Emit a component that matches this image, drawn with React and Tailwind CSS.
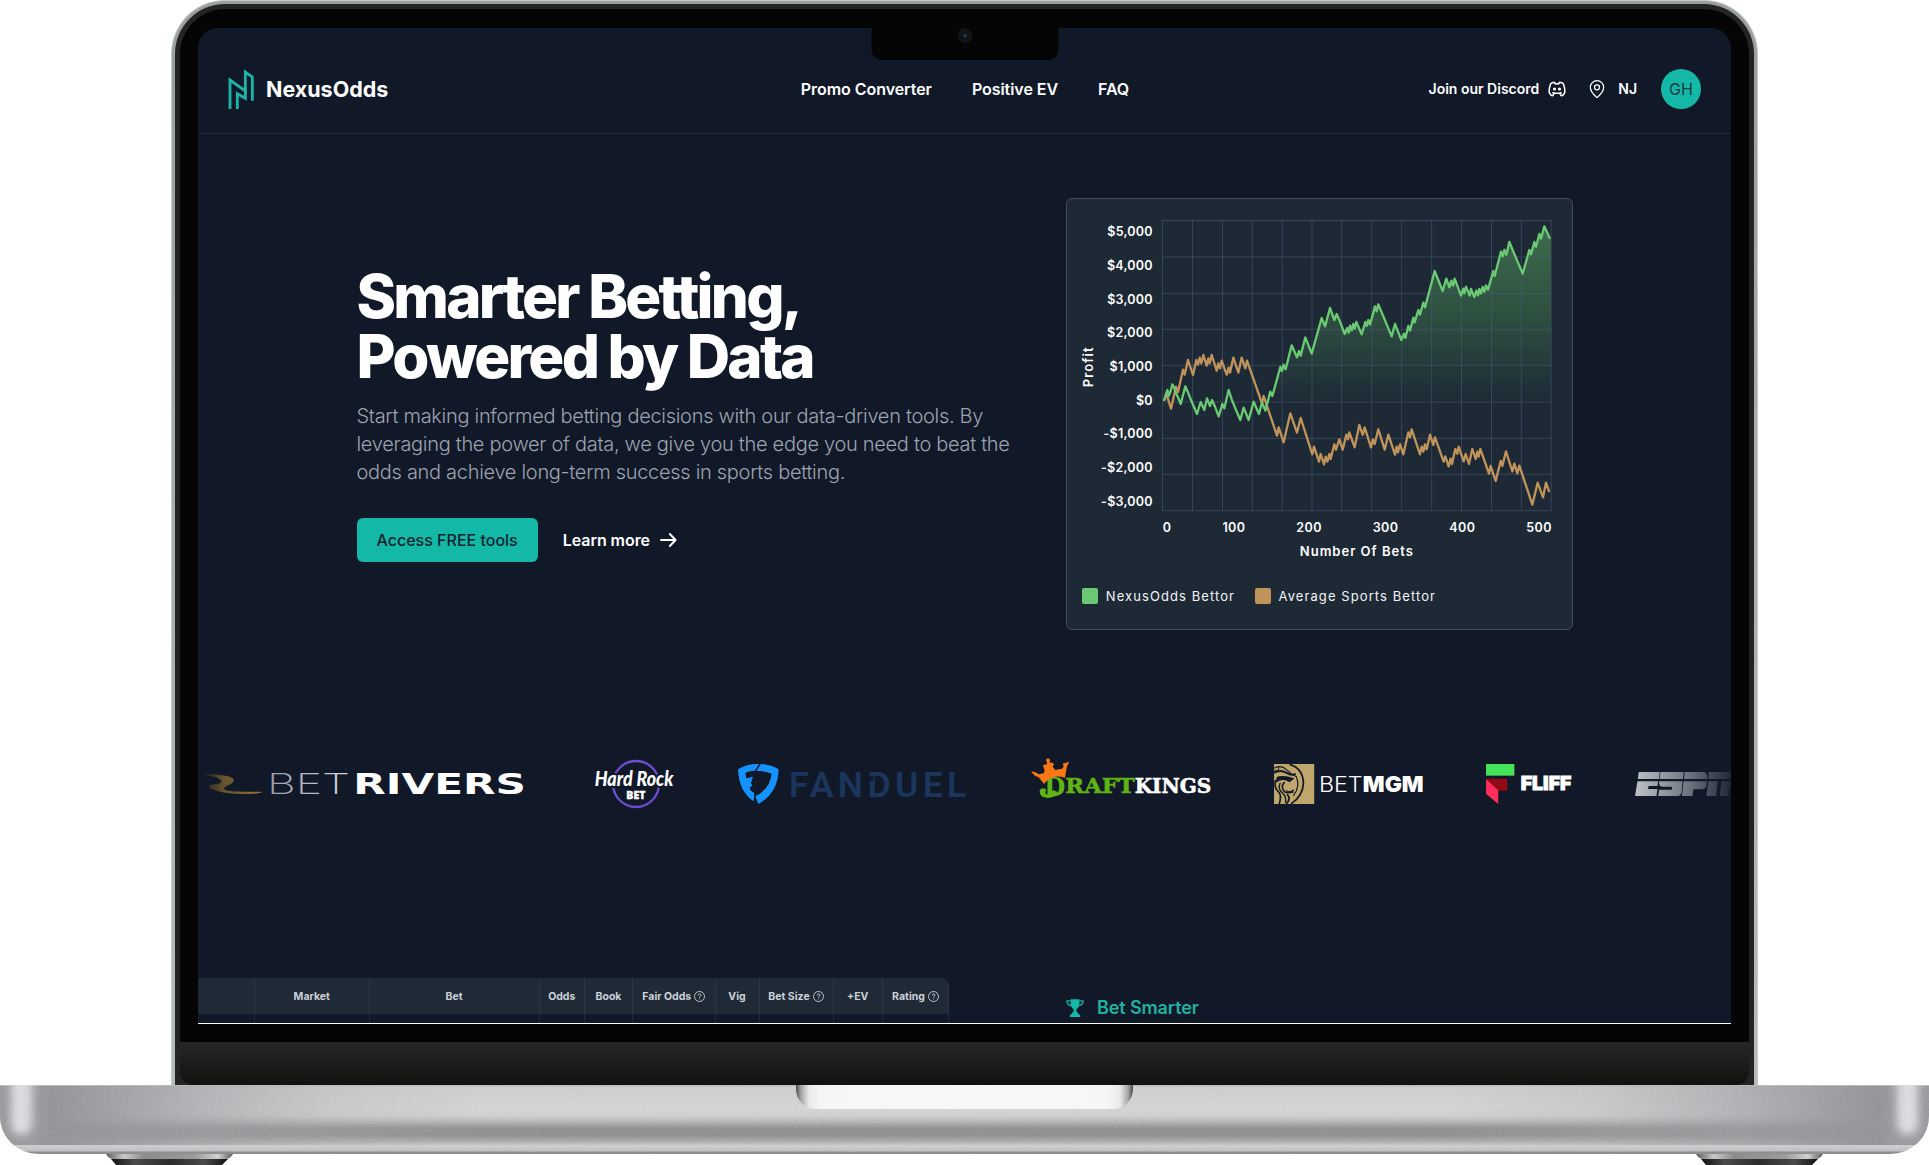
import React from "react";
import { TbBrandDiscord } from "react-icons/tb";
import { MapPin } from "lucide-react";

const NEXUS_LINE =
  "312,633 318,612 322,600 327,617 332,603 337,583 342,592 348,610 354,622 362,642 376,589 383,605 393,630 411,672 422,636 433,660 441,625 450,648 456,630 465,650 476,679 487,642 493,655 506,600 515,628 528,660 541,690 551,653 566,690 581,635 597,672 606,637 616,662 631,605 637,618 645,590 661,531 666,543 671,524 677,538 695,466 711,502 717,483 722,497 736,442 755,491 785,384 795,409 810,354 823,390 830,372 842,400 854,432 862,414 866,428 870,407 875,421 880,402 884,416 889,396 905,433 916,396 920,408 925,390 930,404 945,349 950,364 955,343 995,439 1005,402 1024,450 1032,431 1036,444 1045,408 1050,422 1060,383 1064,397 1075,360 1080,374 1090,338 1095,352 1124,243 1148,303 1159,266 1168,292 1174,272 1179,287 1184,266 1203,317 1210,296 1213,310 1218,290 1229,317 1233,297 1243,321 1249,302 1254,316 1258,297 1263,310 1268,291 1273,305 1278,286 1284,299 1300,243 1304,258 1323,185 1328,199 1333,180 1339,194 1348,156 1388,251 1408,180 1413,193 1423,156 1428,171 1438,132 1443,146 1453,109 1470,146";

const AVERAGE_LINE =
  "312,630 320,614 333,656 348,590 354,606 369,539 374,554 384,510 399,555 409,510 414,524 419,503 424,520 430,495 440,527 445,505 449,520 455,495 470,542 475,520 480,535 485,512 500,554 506,533 510,548 520,503 535,548 545,503 556,535 561,512 606,640 611,618 651,737 656,712 671,757 691,670 711,728 722,684 757,793 762,770 777,815 782,792 792,823 797,800 802,815 808,792 812,807 823,763 828,779 838,748 848,779 859,734 864,748 868,727 884,772 898,705 908,735 914,712 933,772 939,748 944,762 955,718 974,779 985,734 1005,794 1010,770 1014,787 1020,763 1030,793 1045,727 1050,742 1055,718 1080,793 1085,770 1090,785 1095,763 1100,778 1110,734 1120,765 1125,742 1151,815 1156,799 1166,829 1172,806 1176,822 1186,777 1192,791 1196,770 1211,814 1217,792 1227,822 1237,777 1247,807 1252,785 1256,800 1261,777 1287,851 1292,828 1307,873 1322,813 1327,828 1338,784 1357,844 1363,821 1372,850 1378,827 1417,944 1433,878 1449,922 1458,878 1468,906";

const GRID_X = [307.5, 397.5, 487.5, 577, 666.5, 756, 845, 935, 1025, 1115, 1204.5, 1294.5, 1384, 1473.5];
const GRID_Y = [91.5, 201, 310, 418, 526, 636, 745, 853, 962];
const Y_LABELS = ["$5,000", "$4,000", "$3,000", "$2,000", "$1,000", "$0", "-$1,000", "-$2,000", "-$3,000"];
const X_LABELS = ["0", "100", "200", "300", "400", "500"];

function Plot() {
  return (
    <svg className="mt-[20px] block h-[294px] w-[393px] shrink-0" viewBox="303 87 1179 882">
      <defs>
        <linearGradient id="profitFill" x1="0" y1="109" x2="0" y2="636" gradientUnits="userSpaceOnUse">
          <stop offset="0" stopColor="#5fae66" stopOpacity="0.5" />
          <stop offset="0.5" stopColor="#4f9f55" stopOpacity="0.33" />
          <stop offset="1" stopColor="#4f9f55" stopOpacity="0" />
        </linearGradient>
      </defs>
      <polygon points={`625,636 ${NEXUS_LINE.slice(NEXUS_LINE.indexOf("631,605"))} 1473,146 1473,636`} fill="url(#profitFill)" />
      <g stroke="#4b5f7a" strokeOpacity="0.5" strokeWidth="3">
        {GRID_X.map((x) => (
          <line key={x} x1={x} x2={x} y1="90" y2="963" />
        ))}
        {GRID_Y.map((y) => (
          <line key={y} y1={y} y2={y} x1="306" x2="1475" />
        ))}
      </g>
      <polyline points={AVERAGE_LINE} fill="none" stroke="#c0935b" strokeWidth="7" strokeLinejoin="round" />
      <polyline points={NEXUS_LINE} fill="none" stroke="#6cc973" strokeWidth="7" strokeLinejoin="round" />
    </svg>
  );
}

function ProfitCard() {
  return (
    <div className="h-[432px] w-[507px] rounded-md border border-[#434e5b] bg-[#1e2936]">
      <div className="flex h-[315px]">
        <div className="flex h-[303px] w-[42px] items-center justify-center pt-[33px] pl-[1px]">
          <span className="-rotate-90 text-[13px] font-semibold tracking-[1.1px] whitespace-nowrap">Profit</span>
        </div>
        <div className="mt-[17px] flex w-[44px] flex-col items-end text-[12.5px] font-semibold tracking-[0.25px]">
          {Y_LABELS.map((label) => (
            <span key={label} className="flex h-[33.67px] shrink-0 items-center whitespace-nowrap">
              {label}
            </span>
          ))}
        </div>
        <div className="ml-[8px]">
          <Plot />
        </div>
      </div>
      <div className="mt-[2px] flex h-[25px] items-center justify-between pr-[20px] pl-[96px] text-[12.5px] font-semibold tracking-[0.4px]">
        {X_LABELS.map((label) => (
          <span key={label}>{label}</span>
        ))}
      </div>
      <div className="flex h-[22px] items-center justify-center pr-[20px] pl-[95px] text-[13px] font-semibold tracking-[1px]">
        Number Of Bets
      </div>
      <div className="mt-[21px] flex h-[24px] items-center pl-[15px] text-[13px] tracking-[1.08px] text-gray-100">
        <span className="mr-[8px] size-4 rounded-xs bg-[#6cc973]" />
        <span className="pt-[2px]">NexusOdds Bettor</span>
        <span className="mr-[8px] ml-[19.5px] size-4 rounded-xs bg-[#c0935b]" />
        <span className="pt-[2px]">Average Sports Bettor</span>
      </div>
    </div>
  );
}

function Header() {
  return (
    <header className="grid h-[106px] grid-cols-3 items-center border-b border-[#222c3a] pt-[17px] pr-[30px] pl-[30px]">
      <div className="flex items-center gap-[11px]">
        <svg className="h-10 w-[27px]" viewBox="205 207 81 120" fill="none" stroke="#1fb2a6" strokeWidth="8.5">
          <path d="M211 327V240L257 273V216L278 231V302" />
          <path d="M257 262V295L233 281V327" />
        </svg>
        <span className="pt-[2px] text-[21.5px] leading-none font-bold">NexusOdds</span>
      </div>
      <nav className="flex justify-center gap-10 pl-px font-semibold tracking-[-0.05px] whitespace-nowrap">
        <span>Promo Converter</span>
        <span>Positive EV</span>
        <span>FAQ</span>
      </nav>
      <div className="flex items-center justify-end text-sm font-semibold whitespace-nowrap">
        <span>Join our Discord</span>
        <TbBrandDiscord className="ml-[8px] size-5" strokeWidth={1.8} />
        <MapPin className="ml-[20px] size-5" strokeWidth={1.5} />
        <span className="ml-[11px]">NJ</span>
        <span className="ml-[24px] flex size-10 items-center justify-center rounded-full bg-[#14b8a6] text-base font-normal text-[#1a3a44]">
          GH
        </span>
      </div>
    </header>
  );
}

function Hero() {
  return (
    <section className="mx-auto grid w-[1216px] grid-cols-12 items-center pt-16">
      <div className="col-span-7">
        <h1 className="mb-4 text-6xl leading-none font-extrabold tracking-[-2.75px]">
          Smarter Betting,
          <br />
          Powered by Data
        </h1>
        <p className="mb-8 max-w-2xl text-xl leading-7 font-light tracking-[-0.3px] text-[#9ca3af]">
          Start making informed betting decisions with our data-driven tools. By leveraging the power of data, we give you the edge you need
          to beat the odds and achieve long-term success in sports betting.
        </p>
        <div className="flex items-center">
          <button className="h-11 rounded-md bg-[#14b8a6] px-5 font-medium text-[#10242e]">Access FREE tools</button>
          <span className="ml-[25px] font-semibold tracking-[-0.05px]">Learn more</span>
          <svg className="ml-[10px] h-[18px] w-[18px]" viewBox="0 0 18 18" fill="none" stroke="white" strokeWidth="1.9">
            <path d="M1 9h14M9.8 3l5.8 6-5.8 6" strokeLinecap="round" strokeLinejoin="round" />
          </svg>
        </div>
      </div>
      <div className="col-span-5">
        <ProfitCard />
      </div>
    </section>
  );
}

function Word({ x, y, length, size, weight = 700, fill = "#fff", family = "Inter", adjust = "spacingAndGlyphs", children, ...rest }) {
  return (
    <text
      x={x}
      y={y}
      textLength={length}
      lengthAdjust={adjust}
      fontSize={size}
      fontWeight={weight}
      fill={fill}
      fontFamily={`${family}, sans-serif`}
      {...rest}
    >
      {children}
    </text>
  );
}

function BetRivers() {
  return (
    <svg className="w-[328px] shrink-0" height="90" viewBox="24 0 984 270">
      <defs>
        <linearGradient id="riverGold" x1="30" x2="218" y1="0" y2="0" gradientUnits="userSpaceOnUse">
          <stop offset="0" stopColor="#7d642f" stopOpacity="0.05" />
          <stop offset="0.4" stopColor="#7d642f" stopOpacity="0.8" />
          <stop offset="1" stopColor="#8f7434" />
        </linearGradient>
        <linearGradient id="betSilver" x1="237" x2="475" y1="0" y2="0" gradientUnits="userSpaceOnUse">
          <stop offset="0" stopColor="#9a9eae" />
          <stop offset="1" stopColor="#d4d6dd" />
        </linearGradient>
      </defs>
      <path
        d="M35 103C70 101 122 104 131 118C136 132 100 138 102 146C108 157 165 154 218 156C206 163 150 164 112 159C78 154 54 146 57 137C62 132 90 134 94 126C96 115 62 107 35 103Z"
        fill="url(#riverGold)"
      />
      <Word x="231" y="162" length="249" size="86" weight="200" fill="url(#betSilver)">BET</Word>
      <Word x="490" y="162" length="518" size="85" weight="700" family="DejaVu Sans">RIVERS</Word>
    </svg>
  );
}

function HardRock() {
  return (
    <svg className="ml-[65px] w-[86px] shrink-0 overflow-visible" height="90" viewBox="1203 0 258 270">
      <circle cx="1338" cy="132" r="69" fill="none" stroke="#6b4fd0" strokeWidth="7" />
      <Word x="1214" y="138" length="236" size="63" weight="900" family="Lato" fontStyle="italic" stroke="#111827" strokeWidth="12" paintOrder="stroke">
        Hard Rock
      </Word>
      <Word x="1309" y="177" length="57" size="31" weight="800" family="Open Sans" stroke="#fff" strokeWidth="1">BET</Word>
    </svg>
  );
}

function FanDuel() {
  return (
    <svg className="ml-[58px] w-[232px] shrink-0" height="90" viewBox="76 0 696 270">
      <g fill="#1493ff">
        <path d="M85 88Q112 71 148 72L135 92Q116 93 107 99L110 115L130 110L124 128L128 138L120 141L122 150L134 160L132 184Q88 156 85 88Z" />
        <path d="M154 72Q184 74 207 88Q205 160 146 192L137 169Q180 148 186 101Q168 92 140 93Z" />
      </g>
      <Word x="238" y="170" length="532" size="107" weight="600" fill="#1c355c" family="Roboto" adjust="spacing">FANDUEL</Word>
      <path d="M474 108H492V124H474Z" fill="#111827" opacity="0.8" />
    </svg>
  );
}

function DraftKings() {
  return (
    <svg className="ml-[61px] w-[186px] shrink-0" height="90" viewBox="952 0 558 270">
      <Word x="1000" y="168" length="64" size="78" fill="#5fb414" family="DejaVu Serif">D</Word>
      <path d="M1026 150Q1024 166 1008 164Q1001 158 1007 149Q994 140 987 151Q984 172 1012 174Q1040 172 1042 156Z" fill="#5fb414" />
      <path
        d="M961 95Q972 92 984 103L999 100L1002 92L997 76Q1001 72 1008 74L1009 66L1005 60L1012 54L1018 59L1017 68Q1026 66 1030 73L1026 80L1034 90L1054 86L1059 80L1056 71L1076 65L1068 82L1063 114Q1026 100 1000 132L984 112L974 108Z"
        fill="#fa7814"
      />
      <Word x="1064" y="158" length="208" size="59" fill="#5fb414" family="DejaVu Serif" stroke="#5fb414" strokeWidth="1.5">RAFT</Word>
      <Word x="1272" y="158" length="230" size="59" family="DejaVu Serif" stroke="#fff" strokeWidth="1.5">KINGS</Word>
    </svg>
  );
}

function BetMgm() {
  return (
    <svg className="ml-[57px] w-[154px] shrink-0" height="90" viewBox="121 0 456 270" preserveAspectRatio="none">
      <rect x="130" y="72" width="119" height="120" fill="#bfa66c" />
      <g fill="none" stroke="#111827" strokeLinecap="round">
        <path d="M178 74Q216 86 217 130Q215 168 182 190" strokeWidth="5" />
        <path d="M132 84Q152 74 166 88T196 110Q208 140 188 166" strokeWidth="3.5" />
        <path d="M130 98Q150 88 166 98T192 102" strokeWidth="6" />
        <path d="M140 112Q160 106 186 116L176 124Q156 112 138 124Z" strokeWidth="4" fill="#111827" />
        <path d="M132 92Q146 94 144 80" strokeWidth="3" />
        <path d="M160 128Q150 138 158 152Q164 162 186 156" strokeWidth="5" />
        <path d="M166 152Q176 160 188 150" strokeWidth="3" />
        <path d="M134 122Q130 144 142 154T146 190" strokeWidth="5" />
        <path d="M148 130Q140 146 154 158T164 188" strokeWidth="4" />
        <path d="M170 164Q180 176 168 190" strokeWidth="5" />
      </g>
      <Word x="263" y="156" length="129" size="65" weight="300">BET</Word>
      <Word x="393" y="156" length="180" size="65" weight="900">MGM</Word>
    </svg>
  );
}

function Fliff() {
  return (
    <svg className="ml-[57px] w-[93px] shrink-0" height="90" viewBox="745 0 276 270" preserveAspectRatio="none">
      <path d="M757 72H841V107H757Z" fill="#45e35a" />
      <path d="M757 116H820V152H793Z" fill="#940a14" />
      <path d="M757 117L793 151V192L757 161Z" fill="#ff2e5b" />
      <Word x="860" y="150" length="150" size="58" weight="900" stroke="#fff" strokeWidth="2.5">FLIFF</Word>
    </svg>
  );
}

function Espn() {
  return (
    <svg className="ml-[56px] w-[112px] shrink-0" height="90" viewBox="1186 0 330 270" preserveAspectRatio="none">
      <defs>
        <linearGradient id="espnFade" x1="1200" x2="1490" y1="0" y2="0" gradientUnits="userSpaceOnUse">
          <stop offset="0" stopColor="#bcc1c8" />
          <stop offset="0.5" stopColor="#747a85" />
          <stop offset="1" stopColor="#1a2130" />
        </linearGradient>
      </defs>
      <g fill="url(#espnFade)">
        <path d="M1209 96H1271L1268 117H1206Z" />
        <path d="M1273 96H1341L1339 117H1270Z" />
        <path d="M1344 96H1400Q1412 97 1411 117H1342Z" />
        <path d="M1415 96H1500V117H1414Z" />
        <path d="M1205 124H1266L1264 138H1238L1236 147H1264L1261 168H1198Z" />
        <path d="M1269 124H1338L1335 158Q1332 168 1320 168H1266L1269 149H1306L1307 140H1278Q1267 140 1269 124Z" />
        <path d="M1341 124H1410L1408 138Q1405 148 1395 148H1370L1367 168H1336Z" />
        <path d="M1414 124H1442L1437 168H1408Z" />
        <path d="M1452 124H1500V168H1480V140H1476L1473 168H1448Z" />
      </g>
    </svg>
  );
}

const COLUMNS = [
  ["", 57],
  ["Market", 114.5],
  ["Bet", 170],
  ["Odds", 45.5],
  ["Book", 48],
  ["Fair Odds", 82.5, true],
  ["Vig", 44],
  ["Bet Size", 74, true],
  ["+EV", 49.5],
  ["Rating", 66, true],
];

function Help() {
  return (
    <svg className="mb-[2px] ml-[3px] size-[11px]" viewBox="0 0 11 11" fill="none" stroke="currentColor" strokeWidth="0.9">
      <circle cx="5.5" cy="5.5" r="5" />
      <path d="M4.1 4.3Q4.3 3 5.6 3T6.9 4.3Q6.9 5 5.6 5.8V6.6M5.6 7.6V8.4" />
    </svg>
  );
}

function OddsTable() {
  return (
    <div className="w-[751px] overflow-hidden rounded-tr-lg">
      <div className="flex h-9 items-stretch bg-[#202a37] text-[10.5px] font-bold text-[#ccd1d8]">
        {COLUMNS.map(([name, width, help]) => (
          <div key={name} className="flex items-center justify-center border-r border-[#2b3644] pt-[2px] whitespace-nowrap" style={{ width }}>
            {name}
            {help && <Help />}
          </div>
        ))}
      </div>
      <div className="flex h-[9px]">
        {COLUMNS.map(([name, width]) => (
          <div key={name} className="border-r border-[#1f2937]" style={{ width }} />
        ))}
      </div>
    </div>
  );
}

function Trophy() {
  return (
    <svg className="size-[18px]" viewBox="0 0 18 18">
      <path d="M4.6 0.3H13.4V4.5Q13.2 8.6 10.4 10.2V12.4Q12.6 13.8 12.9 15.8H14.2V18H3.8V15.8H5.1Q5.4 13.8 7.6 12.4V10.2Q4.8 8.6 4.6 4.5Z" fill="#14b8a6" />
      <path d="M4.8 1.9H.9Q.8 5.6 5.4 6.7M13.2 1.9H17.1Q17.2 5.6 12.6 6.7" fill="none" stroke="#14b8a6" strokeWidth="1.3" />
    </svg>
  );
}

function Screen() {
  return (
    <div className="relative h-[995px] overflow-hidden rounded-t-[20px] bg-[#111827] text-white">
      <Header />
      <Hero />
      <div className="mt-[110px] flex h-[90px] overflow-hidden">
        <BetRivers />
        <HardRock />
        <FanDuel />
        <DraftKings />
        <BetMgm />
        <Fliff />
        <Espn />
      </div>
      <div className="mt-[148px] flex items-start">
        <OddsTable />
        <div className="mt-[16px] ml-[117px] flex items-center gap-[13px]">
          <Trophy />
          <span className="text-lg font-semibold tracking-[-0.12px] text-[#22b1a1]">Bet Smarter</span>
        </div>
      </div>
      <div className="absolute top-0 left-1/2 h-[32px] w-[187px] -translate-x-1/2 rounded-b-[10px] bg-[#050505]">
        <div className="mx-auto flex size-[15px] items-center justify-center rounded-full bg-[#141414]">
          <div className="size-[3px] rounded-full bg-[#1d3f86]" />
        </div>
      </div>
    </div>
  );
}

function Foot() {
  return (
    <svg width="127" height="12" viewBox="0 0 127 12">
      <defs>
        <linearGradient id="footMetal" x1="0" x2="1" y1="0" y2="0">
          <stop offset="0" stopColor="#5c5c5c" />
          <stop offset="0.14" stopColor="#c9cacc" />
          <stop offset="0.3" stopColor="#8b8c8e" />
          <stop offset="0.7" stopColor="#9b9c9e" />
          <stop offset="0.88" stopColor="#d0d1d3" />
          <stop offset="1" stopColor="#5c5c5c" />
        </linearGradient>
        <linearGradient id="footRubber" x1="0" x2="1" y1="0" y2="0">
          <stop offset="0" stopColor="#111" />
          <stop offset="0.2" stopColor="#4a4a4a" />
          <stop offset="0.5" stopColor="#2c2c2c" />
          <stop offset="0.8" stopColor="#4a4a4a" />
          <stop offset="1" stopColor="#111" />
        </linearGradient>
      </defs>
      <path d="M0 0H127Q125 4 120 5.5H7Q2 4 0 0Z" fill="url(#footMetal)" />
      <path d="M5 5H122L116 11H10Z" fill="url(#footRubber)" />
    </svg>
  );
}

function Base() {
  return (
    <div>
      <div className="relative h-[69px] w-[1929px] overflow-hidden rounded-b-[38px] bg-[linear-gradient(180deg,#b4b5b7_0,#d0d1d3_2px,#d6d7d9_22px,#d2d3d5_31px,#b4b5b7_37px,#8f9092_43px,#8c8d8f_50px,#a9aaac_56px,#d0d1d3_61px,#c0c1c3_66px,#8a8b8d_67px,#8a8b8d_69px)]">
        <div className="absolute inset-x-0 top-[1px] bottom-[9px] bg-[linear-gradient(90deg,#98999c_0,#98999c_36px,#929396_52px,rgba(150,151,154,0.85)_110px,rgba(158,159,162,0.6)_200px,rgba(170,171,174,0.25)_330px,transparent_480px,transparent_1449px,rgba(170,171,174,0.25)_1599px,rgba(158,159,162,0.6)_1729px,rgba(150,151,154,0.85)_1819px,#929396_1877px,#98999c_1893px,#98999c_1929px)]" />
        <div className="absolute -top-4 left-[11px] h-[66px] w-[21px] rounded-full bg-[#e0e1e4] blur-[4px]" />
        <div className="absolute -top-4 right-[11px] h-[66px] w-[21px] rounded-full bg-[#e0e1e4] blur-[4px]" />
        <svg className="absolute inset-0 h-full w-full opacity-20">
          <filter id="metalGrain">
            <feTurbulence type="fractalNoise" baseFrequency="0.8" numOctaves="2" />
            <feColorMatrix type="saturate" values="0" />
          </filter>
          <rect width="100%" height="100%" filter="url(#metalGrain)" />
        </svg>
        <div className="absolute top-0 left-[796px] h-[24px] w-[337px] rounded-b-[20px] bg-[linear-gradient(90deg,#4a4a4c_0,#a5a6a8_5px,#e9eaeb_13px,#f6f6f6_26px,#f8f8f8_50%,#f6f6f6_311px,#e9eaeb_324px,#a5a6a8_332px,#4a4a4c_337px)]" />
      </div>
      <div className="flex justify-between px-[106px]">
        <Foot />
        <Foot />
      </div>
    </div>
  );
}

export default function App() {
  return (
    <div className="h-[1165px] w-[1929px] overflow-hidden bg-white font-['Inter',sans-serif]">
      <div className="mx-auto h-[1085px] w-[1587px] overflow-hidden rounded-t-[54px] border-x border-t border-[#c6c9c9] bg-linear-to-b from-[#9a9e9e] to-[#b9bcbc] px-[3px] pt-[3px]">
        <div className="h-full rounded-t-[50px] bg-[#232424] px-[5px] pt-[5px]">
          <div className="flex h-full flex-col overflow-hidden rounded-t-[45px] rounded-b-[14px] bg-[#050505]">
            <div className="mx-[18px] mt-[19px] border-b border-white">
              <Screen />
            </div>
            <div className="mt-[18px] flex-1 bg-linear-to-b from-[#272727] to-[#111110]" />
          </div>
        </div>
      </div>
      <Base />
    </div>
  );
}
